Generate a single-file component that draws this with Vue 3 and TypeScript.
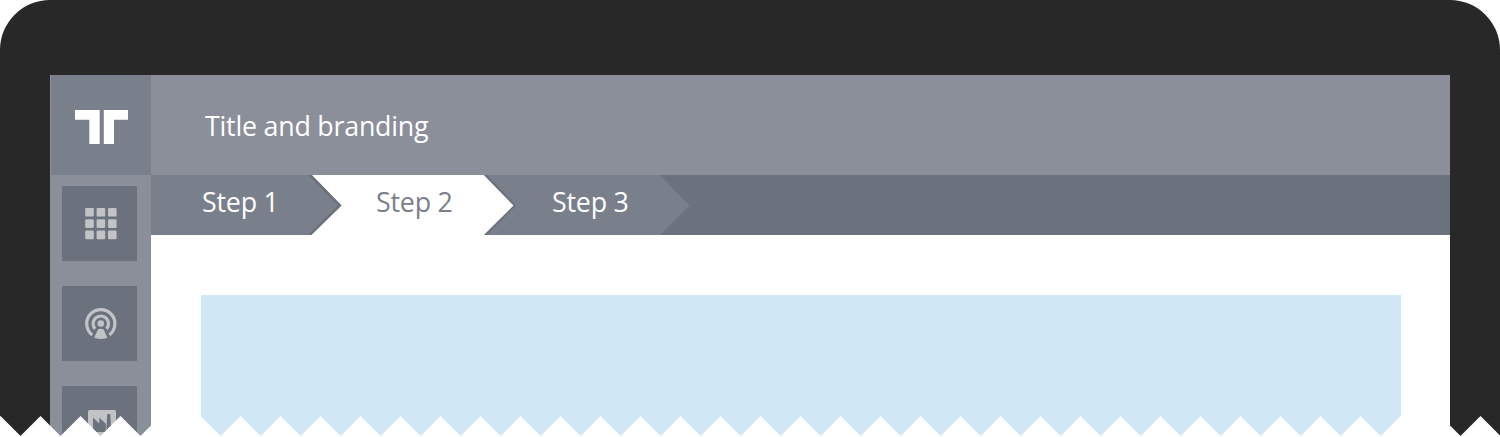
<script setup lang="ts">
interface Step { label: string; active?: boolean }

const steps: Step[] = [
  { label: 'Step 1' },
  { label: 'Step 2', active: true },
  { label: 'Step 3' },
]

// Saw-tooth edge along the bottom of the device
let teeth = 'M-20 437V20L-19.5 20'
for (let x = 0.5; x <= 1500.5; x += 40) {
  teeth += `L${x} 0L${x + 20} 20`
}
teeth += 'V437Z'
</script>

<template>
  <div class="device">
    <div class="screen">
      <aside class="sidebar">
        <div class="brand">
          <svg width="54" height="35" viewBox="0 0 54 35" fill="#fff">
            <path d="M0 0H24.7V34H14.3V9.7H0Z" />
            <path d="M28.8 0H53V9.7H39V34H28.8Z" />
          </svg>
        </div>
        <nav class="apps">
          <div class="tile">
            <svg width="75" height="75" viewBox="0 0 75 75" fill="#c1c3c7">
              <g v-for="r in 3" :key="r">
                <rect v-for="c in 3" :key="c" :x="23.2 + (c - 1) * 11.4" :y="22 + (r - 1) * 11.3" width="8.6" height="8.6" rx="1.2" />
              </g>
            </svg>
          </div>
          <div class="tile">
            <svg width="75" height="75" viewBox="0 0 75 75" fill="none" stroke="#c1c3c7" stroke-width="3.2">
              <path d="M30.2 48.9A14.1 14.1 0 1 1 47.4 48.9" />
              <path d="M33.1 42.9A7.7 7.7 0 1 1 44.5 42.9" />
              <circle cx="38.8" cy="37.5" r="3.3" fill="#c1c3c7" stroke="none" />
              <path d="M36.1 43.2Q38.8 42.2 41.5 43.2L45.2 51.2Q45.2 52 43.8 52.3Q38.8 53.8 33.8 52.3Q32.4 52 32.4 51.2Z" fill="#c1c3c7" stroke="none" />
            </svg>
          </div>
          <div class="tile">
            <svg width="75" height="75" viewBox="0 0 75 75">
              <rect x="26" y="24" width="28" height="28" rx="1.5" fill="#c1c3c7" />
              <path d="M31 46V31.5L37.3 37.5V31.5L43.8 37.8V46ZM44.3 46L45.2 28H48.3L49.2 46Z" fill="#6b717d" />
            </svg>
          </div>
        </nav>
      </aside>
      <div class="main">
        <header class="title">Title and branding</header>
        <div class="steps">
          <div v-for="step in steps" :key="step.label" class="step" :class="{ active: step.active }">
            <span>{{ step.label }}</span>
          </div>
          <svg class="arrows" width="560" height="60" viewBox="0 0 560 60">
            <path d="M157 0H161L191 30.5L161 60H157L187 30.5Z" fill="#6b717d" />
            <path d="M161 0H333L362.7 30.5L333 60H160.5L190.7 30.5Z" fill="#fff" />
            <path d="M333 0H336L365 30.5L336 60H333L362.7 30.5Z" fill="#6b717d" />
            <path d="M509 0H560V60H509L538.7 30.5Z" fill="#6b717d" />
          </svg>
        </div>
        <main class="content"><div class="panel"></div></main>
      </div>
    </div>
    <svg class="teeth" width="1500" height="21" viewBox="0 0 1500 21" fill="#fff"><path :d="teeth" /></svg>
  </div>
</template>

<style>
html, body { margin: 0; background: #fff; overflow: hidden; }
</style>

<style scoped>
.device {
  position: relative;
  box-sizing: border-box;
  width: 1500px;
  height: 437px;
  padding: 75px 50px 0;
  overflow: hidden;
  background: #282828;
  border-radius: 50px 50px 0 0;
  font-family: "Open Sans", "Noto Sans", sans-serif;
  font-size: 26.8px;
  letter-spacing: -0.22px;
}
.screen { display: flex; height: 362px; background: #fff; }
.sidebar { flex: 0 0 101px; background: #8b8f9a; }
.brand {
  box-sizing: border-box;
  height: 100px;
  margin-left: 1px;
  padding: 35px 0 0 24px;
  background: #7a808b;
}
.brand svg, .tile svg { display: block; }
.apps { display: flex; flex-direction: column; gap: 25px; padding: 11px 14px 0 12px; }
.tile { width: 75px; height: 75px; background: #6b717d; }
.main { flex: 1; min-width: 0; }
.title {
  box-sizing: border-box;
  height: 100px;
  padding-left: 54px;
  line-height: 101px;
  color: #fff;
  background: #8b8f9a;
}
.steps { position: relative; display: flex; height: 60px; background: #6b717d; }
.step {
  box-sizing: border-box;
  width: 174px;
  padding-left: 51px;
  line-height: 54px;
  color: #fff;
  background: #7a808b;
}
.step span { position: relative; z-index: 1; }
.step.active { color: #7a808b; }
.step:last-of-type { width: 212px; padding-left: 53px; }
.arrows { position: absolute; top: 0; left: 0; }
.content { padding: 60px 49px 0 50px; }
.panel { height: 142px; background: #d0e7f5; }
.teeth { position: absolute; left: 0; bottom: 0; }
</style>
